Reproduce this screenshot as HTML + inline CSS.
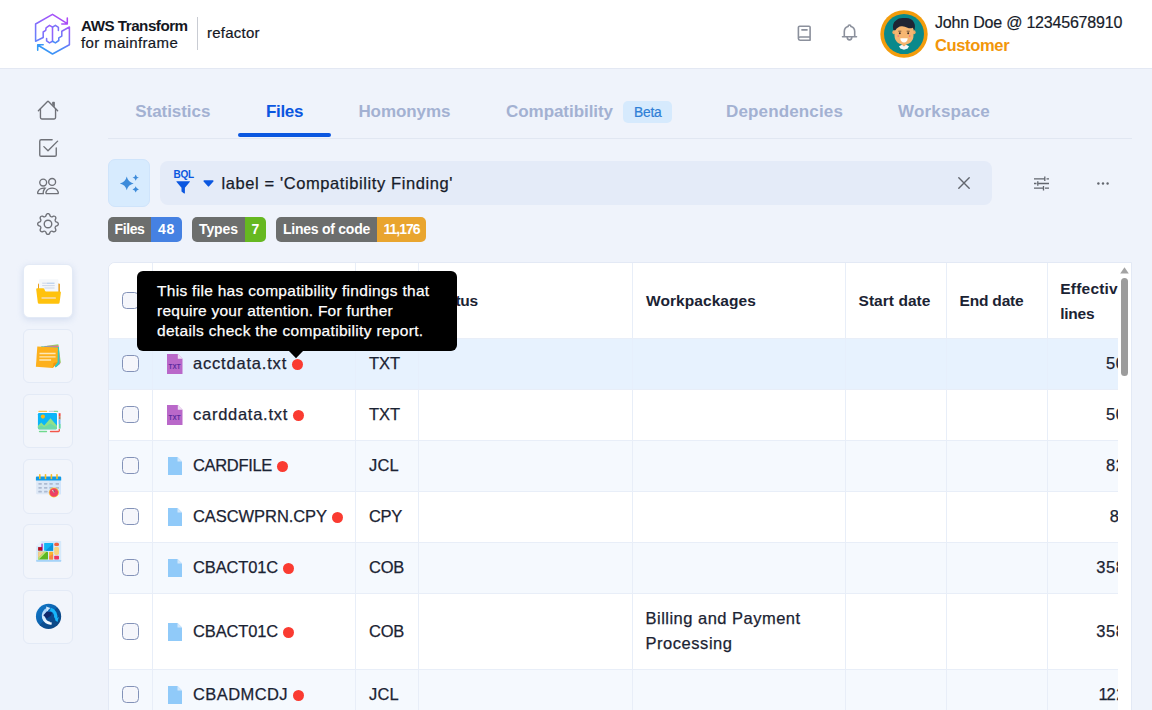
<!DOCTYPE html>
<html lang="en">
<head>
<meta charset="utf-8">
<title>AWS Transform for mainframe - refactor</title>
<style>
*{box-sizing:border-box;margin:0;padding:0}
html,body{width:1152px;height:710px;overflow:hidden}
body{font-family:"Liberation Sans",sans-serif;background:#eff3fb;color:#1b2333;position:relative}
.abs{position:absolute}
.t{position:absolute;white-space:nowrap;line-height:1}
/* header */
#hdr{position:absolute;left:0;top:0;width:1152px;height:68px;background:#fff;border-bottom:1px solid #e3e8f3;box-sizing:content-box}
/* sidebar */
.sic{position:absolute;left:37px;width:22px;height:22px;fill:#6f7178}
.card{position:absolute;left:23px;width:50px;height:54px;border:1px solid #e3eaf6;border-radius:6px;background:#f2f5fb}
.card.on{background:#fff;box-shadow:0 2px 6px rgba(170,188,225,.4)}
/* tabs */
.tab{position:absolute;top:102px;font-size:17px;font-weight:bold;color:#a3b1d2;white-space:nowrap;line-height:20px}
/* badges */
.bdg{position:absolute;top:217px;height:25px;border-radius:5px;overflow:hidden;display:flex;font-size:14px;font-weight:bold;color:#fff;line-height:25px;white-space:nowrap}
.bdg span{display:block;text-align:center;height:25px}
.bdg .g{background:#6c6e6d}
/* table */
#tbl{position:absolute;left:108px;top:262px;width:1024px;height:470px;background:#fff;border:1px solid #e3e9f5;border-radius:7px 0 0 7px;overflow:hidden}
.row{position:absolute;left:0;width:1012px;border-bottom:1px solid #e8eef8}
.vl{position:absolute;top:0;width:1px;height:470px;background:#e8eef8}
.cb{position:absolute;left:13px;width:17px;height:17px;border:1px solid #8392b8;border-radius:4.500px;background:#f5f6fb}
.fn{position:absolute;left:84px;font-size:16.5px;white-space:nowrap;line-height:20px;color:#1b2333}
.ty{position:absolute;left:260px;font-size:16.5px;white-space:nowrap;line-height:20px;color:#1b2333}
.num{position:absolute;font-size:16.5px;white-space:nowrap;line-height:20px;color:#1b2333}
.dot{display:inline-block;width:11px;height:11px;border-radius:50%;background:#fa3b31;margin-left:5px;vertical-align:-1.300px;letter-spacing:0}
.fi{position:absolute;left:58px;width:16px;height:20px}
.fn,.ty,.num{-webkit-text-stroke:.25px #1b2333}
.th{position:absolute;font-size:15.5px;font-weight:bold;white-space:nowrap;line-height:20px;color:#1b2333}
</style>
</head>
<body>
<div id="hdr">
<svg class="abs" style="left:25px;top:5px" width="60" height="60" viewBox="0 0 60 60" fill="none" stroke-width="1.550" stroke-linejoin="round" stroke-linecap="round">
<defs>
<linearGradient id="lg1" x1="10" y1="37" x2="42" y2="10" gradientUnits="userSpaceOnUse"><stop offset="0" stop-color="#5f86fb"/><stop offset=".55" stop-color="#9a5cfb"/><stop offset="1" stop-color="#b044f5"/></linearGradient>
<linearGradient id="lg2" x1="14" y1="48" x2="44" y2="22" gradientUnits="userSpaceOnUse"><stop offset="0" stop-color="#2f9df5"/><stop offset=".5" stop-color="#4b8bf8"/><stop offset="1" stop-color="#a45bf8"/></linearGradient>
</defs>
<path stroke="url(#lg1)" d="M42.3 18.6 L27.5 9.3 L10.6 19 L10.6 36.3 L18.2 32.5 L18.2 27 L20.7 25.4 L21.1 22.8 L24.5 20.3 L27.5 22.1 L27.5 36.3 L24.5 37.9 L21.6 35.9 L21.6 33.4 M36.8 19 H42.3 V13.1"/>
<path stroke="url(#lg2)" d="M12.7 40 L27.5 49 L44.4 39.7 L44.4 22 L36.8 26.2 L36.8 31.1 L33.8 32.8 L33.8 35.5 L30.4 37.9 L27.5 36.3 M27.5 22.1 L30.4 20.3 L33.4 22.4 L33.4 25.4 M18.2 39.7 H12.7 V45.2"/>
</svg>
<div class="t" style="left:81px;top:17.400px;font-size:15.200px;font-weight:bold;color:#14171f;letter-spacing:-.5px;line-height:17px">AWS Transform</div>
<div class="t" style="left:81px;top:34px;font-size:15px;color:#14171f;-webkit-text-stroke:.2px #14171f;letter-spacing:.35px;line-height:18px">for mainframe</div>
<div class="abs" style="left:197px;top:17px;width:1px;height:33px;background:#c9ccd3"></div>
<div class="t" style="left:207px;top:24.400px;font-size:15px;color:#14171f;-webkit-text-stroke:.2px #14171f;letter-spacing:.25px;line-height:18px">refactor</div>
<svg class="abs" style="left:796px;top:24px" width="18" height="19" viewBox="0 0 18 19" fill="none" stroke="#8b909c" stroke-width="1.6" stroke-linecap="round" stroke-linejoin="round"><path d="M2.4 14.6V3.6a1.3 1.3 0 0 1 1.3-1.3h9.4a1 1 0 0 1 1 1V16.2H4a1.6 1.6 0 0 1 0-3.2h10.1"/><path d="M5.9 5.9h5.1"/></svg>
<svg class="abs" style="left:840px;top:23px" width="19" height="20" viewBox="0 0 19 20" fill="none" stroke="#8b909c" stroke-width="1.6" stroke-linecap="round" stroke-linejoin="round"><path d="M2.5 13.7h14M4.3 13.5V8.4a5.2 5.2 0 0 1 3.8-5 1.4 1.4 0 0 1 2.8 0 5.2 5.2 0 0 1 3.8 5v5.1"/><path d="M7.2 14a2.3 2.9 0 0 0 4.6 0"/></svg>
<svg class="abs" style="left:880px;top:10px" width="48" height="48" viewBox="0 0 48 48">
<circle cx="24" cy="24" r="23.7" fill="#f39c0c"/><circle cx="24" cy="24" r="20" fill="#0a898b"/>
<path d="M19.5 43.4 L20 36 h8 l.5 7.4 A20 20 0 0 1 19.500 43.400z" fill="#0a898b"/>
<path d="M21.8 33h4.400v4.500h-4.400z" fill="#f0a862"/>
<path d="M19 36.300 l3-1.500 2 1.700 2-1.700 3 1.500 -1.300 2.300 -3.700 1.200 -3.700-1.200z" fill="#f4f6fa"/>
<ellipse cx="13.900" cy="22.200" rx="1.500" ry="2" fill="#f0a862"/><ellipse cx="34.100" cy="22.200" rx="1.500" ry="2" fill="#f0a862"/>
<path d="M14.500 14 h19 v11.500 c0 5.500-4 9.300-9.500 9.300 s-9.500-3.800-9.500-9.300z" fill="#f6b672"/>
<path d="M13.300 20 C12.300 15.500 13.300 12.200 16 10.500 C18 8.100 22 7.500 25 8.100 C29 7.700 32.700 9.400 33.900 12.500 C35.300 14.500 35.100 17.600 34.400 20.200 L32.700 17.700 C31 18.500 29 18.400 27.500 17.700 C25.500 16.600 23.500 16 21.500 16.200 C19 16.400 17 17.700 15.400 20.200 Z" fill="#1f2534"/>
<circle cx="19.800" cy="23.200" r="1" fill="#3a2b25"/><circle cx="28.200" cy="23.200" r="1" fill="#3a2b25"/>
<path d="M18.300 21.200h3M26.700 21.200h3" stroke="#5a4030" stroke-width=".8"/>
<circle cx="18.300" cy="26" r=".9" fill="#f77f7a"/><circle cx="29.700" cy="26" r=".9" fill="#f77f7a"/>
<path d="M20.300 28.300 h7.400 c0 2.700-1.600 4.200-3.700 4.200 s-3.700-1.500-3.700-4.200z" fill="#fff"/>
</svg>
<div class="t" style="left:935px;top:13.500px;font-size:16px;color:#171c2a;-webkit-text-stroke:.2px #171c2a;letter-spacing:-.2px;line-height:18px">John Doe @ 12345678910</div>
<div class="t" style="left:935px;top:35.500px;font-size:16.500px;font-weight:bold;color:#f2960a;letter-spacing:-.35px;line-height:18px">Customer</div>
</div>
<div id="side">
<svg class="sic" style="top:99px" viewBox="0 0 16 16"><path fill-rule="evenodd" d="M2 13.5V7h1v6.500a.5.5 0 0 0 .5.500h9a.5.5 0 0 0 .5-.5V7h1v6.500a1.500 1.500 0 0 1-1.500 1.500h-9A1.500 1.500 0 0 1 2 13.500zm11-11V6l-2-2V2.500a.5.5 0 0 1 .5-.5h1a.5.5 0 0 1 .5.500z"/><path fill-rule="evenodd" d="M7.293 1.500a1 1 0 0 1 1.414 0l6.647 6.646a.5.5 0 0 1-.708.708L8 2.207 1.354 8.854a.5.5 0 1 1-.708-.708L7.293 1.500z"/></svg>
<svg class="sic" style="top:137px" viewBox="0 0 16 16"><path d="M3 14.500A1.500 1.500 0 0 1 1.500 13V3A1.500 1.500 0 0 1 3 1.500h8a.5.5 0 0 1 0 1H3a.5.5 0 0 0-.5.500v10a.5.5 0 0 0 .5.500h10a.5.5 0 0 0 .5-.5V8a.5.5 0 0 1 1 0v5a1.500 1.500 0 0 1-1.500 1.500H3z"/><path d="m8.354 10.354 7-7a.5.5 0 0 0-.708-.708L8 9.293 5.354 6.646a.5.5 0 1 0-.708.708l3 3a.5.5 0 0 0 .708 0z"/></svg>
<svg class="sic" style="top:175px" viewBox="0 0 16 16"><path d="M15 14s1 0 1-1-1-4-5-4-5 3-5 4 1 1 1 1h8zm-7.978-1A.261.261 0 0 1 7 12.996c.001-.264.167-1.030.760-1.720C8.312 10.629 9.282 10 11 10c1.717 0 2.687.630 3.240 1.276.593.690.758 1.457.760 1.720l-.008.002a.274.274 0 0 1-.014.002H7.022zM11 7a2 2 0 1 0 0-4 2 2 0 0 0 0 4zm3-2a3 3 0 1 1-6 0 3 3 0 0 1 6 0zM6.936 9.280a5.880 5.880 0 0 0-1.230-.247A7.350 7.350 0 0 0 5 9c-4 0-5 3-5 4 0 .667.333 1 1 1h4.216A2.238 2.238 0 0 1 5 13c0-1.010.377-2.042 1.090-2.904.243-.294.526-.569.846-.816zM4.920 10A5.493 5.493 0 0 0 4 13H1c0-.260.164-1.030.760-1.724.545-.636 1.492-1.256 3.160-1.275zM1.500 5.500a3 3 0 1 1 6 0 3 3 0 0 1-6 0zm3-2a2 2 0 1 0 0 4 2 2 0 0 0 0-4z"/></svg>
<svg class="sic" style="top:213px" viewBox="0 0 16 16"><path d="M8 4.754a3.246 3.246 0 1 0 0 6.492 3.246 3.246 0 0 0 0-6.492zM5.754 8a2.246 2.246 0 1 1 4.492 0 2.246 2.246 0 0 1-4.492 0z"/><path d="M9.796 1.343c-.527-1.790-3.065-1.790-3.592 0l-.094.319a.873.873 0 0 1-1.255.520l-.292-.160c-1.640-.892-3.433.902-2.540 2.541l.159.292a.873.873 0 0 1-.520 1.255l-.319.094c-1.790.527-1.790 3.065 0 3.592l.319.094a.873.873 0 0 1 .520 1.255l-.160.292c-.892 1.640.901 3.434 2.541 2.540l.292-.159a.873.873 0 0 1 1.255.520l.094.319c.527 1.790 3.065 1.790 3.592 0l.094-.319a.873.873 0 0 1 1.255-.520l.292.160c1.640.893 3.434-.902 2.540-2.541l-.159-.292a.873.873 0 0 1 .520-1.255l.319-.094c1.790-.527 1.790-3.065 0-3.592l-.319-.094a.873.873 0 0 1-.520-1.255l.160-.292c.893-1.640-.902-3.433-2.541-2.540l-.292.159a.873.873 0 0 1-1.255-.520l-.094-.319zm-2.633.283c.246-.835 1.428-.835 1.674 0l.094.319a1.873 1.873 0 0 0 2.693 1.115l.291-.160c.764-.415 1.600.420 1.184 1.185l-.159.292a1.873 1.873 0 0 0 1.116 2.692l.318.094c.835.246.835 1.428 0 1.674l-.319.094a1.873 1.873 0 0 0-1.115 2.693l.160.291c.415.764-.420 1.600-1.185 1.184l-.291-.159a1.873 1.873 0 0 0-2.693 1.116l-.094.318c-.246.835-1.428.835-1.674 0l-.094-.319a1.873 1.873 0 0 0-2.692-1.115l-.292.160c-.764.415-1.600-.420-1.184-1.185l.159-.291A1.873 1.873 0 0 0 1.945 8.930l-.319-.094c-.835-.246-.835-1.428 0-1.674l.319-.094A1.873 1.873 0 0 0 3.060 4.377l-.160-.292c-.415-.764.420-1.600 1.185-1.184l.292.159a1.873 1.873 0 0 0 2.692-1.115l.094-.319z"/></svg>
<div class="card on" style="top:264px"><svg class="abs" style="left:12px;top:14px" width="26" height="26" viewBox="0 0 26 26"><rect x="2" y="4.600" width="21.900" height="12" rx="1" fill="#e89c1a"/><path d="M3 .9a.6.600 0 0 1 .6-.6h18.200a.6.600 0 0 1 .6.600v13h-19.400z" fill="#f5f7fa"/><path d="M6.200 4.200h4.800M6.200 6.600h12.500M8.500 9h10" stroke="#c9d3e6" stroke-width=".9"/><path d="M11 4.200h7.500" stroke="#9fc0ea" stroke-width=".9"/><path d="M.2 10.400a1 1 0 0 1 1-1.100h6.200a1 1 0 0 1 .8.500l.9 2.100a1 1 0 0 0 .8.500h14a1 1 0 0 1 1 1.100l-1.300 10a1.400 1.400 0 0 1-1.400 1.300H3.200a1.400 1.400 0 0 1-1.400-1.300z" fill="#ffc20d"/><rect x="5.500" y="18" width="14.400" height="2" rx=".6" fill="#f8d58c"/></svg></div>
<div class="card" style="top:329px"><svg class="abs" style="left:11px;top:14px" width="27" height="26" viewBox="0 0 27 26"><path d="M12 1.800l11.300-1.600 2.500 18.300-4 3.800z" fill="#86dc5c"/><path d="M9 2l14.500-.4 1.800 17.900-4 3.500z" fill="#f26d9b"/><path d="M6 2.300l18 .7.600 17-4 3.500z" fill="#2fc9c4"/><path d="M2.300 2.500l20.600 1.100-.3 14.400-4.800 5.900-16.900-1.100z" fill="#fdb01c"/><path d="M17.800 23.900l.7-4.800 4.100-1.100z" fill="#ee9610"/><path d="M4.500 9.500h16.100M4.400 12.900h16.200M4.300 16h11.800" stroke="#fde7b8" stroke-width="1.400"/></svg></div>
<div class="card" style="top:394px"><svg class="abs" style="left:11px;top:14px" width="27" height="26" viewBox="0 0 27 26"><g stroke-width="1.300" fill="none" stroke-linecap="round"><path d="M4 2.500h7.500" stroke="#fbc24d"/><path d="M14.500 2.500h5" stroke="#c9cfdb"/><path d="M19.500 2.500h3" stroke="#7ed99a"/><path d="M4.500 22.500h7" stroke="#6fd98e"/><path d="M15.500 22.500h8" stroke="#f2564a"/><path d="M24.300 20.500v1.500" stroke="#f2564a"/></g><g stroke-width="1.900" fill="none"><path d="M24.600 4.200v3" stroke="#f4443c"/><path d="M24.600 7.200v3.300" stroke="#b57a4a"/><path d="M24.500 10.500v4.500" stroke="#6db6f2"/><path d="M24.700 15v4.600" stroke="#5dd6a4"/></g><rect x="1.700" y="3" width="21.400" height="18.300" rx="1.600" fill="#f7f9fd"/><rect x="2.900" y="4.100" width="19.100" height="16.100" rx="1.200" fill="#0bb5f8"/><path d="M2.900 17l3.300-3.400 3 3 6.300-7.400 6.500 7.500v2.300a1.200 1.200 0 0 1-1.200 1.200H4.100a1.200 1.200 0 0 1-1.200-1.200z" fill="#8fe08b"/><path d="M2.900 18.400l3.300-2 3 1.800 6.300-3.800 6.500 4v.6a1.200 1.200 0 0 1-1.200 1.200H4.100a1.200 1.200 0 0 1-1.200-1.200z" fill="#6fd9a6"/><circle cx="7.900" cy="7.600" r="2.100" fill="#fdb813"/></svg></div>
<div class="card" style="top:459px;height:55px"><svg class="abs" style="left:11px;top:13px" width="28" height="27" viewBox="0 0 28 27"><rect x="1.200" y="6" width="24.800" height="15.300" rx=".8" fill="#dde8f6"/><rect x="14" y="7.500" width="12" height="13.800" fill="#d2e5fb"/><path d="M.9 4.500a1 1 0 0 1 1-1h23.300a1 1 0 0 1 1 1v3h-25.300z" fill="#109ae6"/><g fill="#fbbd23"><rect x="4" y="1" width="1.600" height="5.200" rx=".8"/><rect x="9.700" y="1" width="1.600" height="5.200" rx=".8"/><rect x="15.600" y="1" width="1.600" height="5.200" rx=".8"/><rect x="21.200" y="1" width="1.600" height="5.200" rx=".8"/></g><g fill="#adbbd2"><rect x="3.4" y="9.9" width="3.400" height="1.800" rx=".4"/><rect x="9.0" y="9.9" width="3.400" height="1.800" rx=".4"/><rect x="14.4" y="9.9" width="3.400" height="1.800" rx=".4"/><rect x="20.6" y="9.9" width="3.400" height="1.800" rx=".4"/><rect x="3.4" y="13.9" width="3.400" height="1.800" rx=".4"/><rect x="9.0" y="13.9" width="3.400" height="1.800" rx=".4"/><rect x="14.4" y="13.9" width="3.400" height="1.800" rx=".4"/><rect x="20.6" y="13.9" width="3.400" height="1.800" rx=".4"/><rect x="3.4" y="17.8" width="3.400" height="1.800" rx=".4"/><rect x="9.0" y="17.8" width="3.400" height="1.800" rx=".4"/><rect x="14.4" y="17.8" width="3.400" height="1.800" rx=".4"/><rect x="20.6" y="17.8" width="3.400" height="1.800" rx=".4"/></g><circle cx="18.900" cy="19.500" r="5.100" fill="#fbc535"/><circle cx="18.900" cy="19.500" r="4.300" fill="#ee4062"/><path d="M18.900 19.500l-1.400-2.600" stroke="#f5f0f0" stroke-width="1" fill="none"/><path d="M18.900 19.500l.3-2.300" stroke="#4a6b6b" stroke-width=".8" fill="none"/></svg></div>
<div class="card" style="top:524px;height:55px"><svg class="abs" style="left:12px;top:15px" width="26" height="24" viewBox="0 0 26 24"><path d="M5.300 1.100h19.300a.6.600 0 0 1 .6.600v19.400a.6.600 0 0 1-.6.600H.8a.6.600 0 0 1-.6-.6V6.200z" fill="#d5e9fb"/><path d="M.2 6.200l5.100-5.100v5.100z" fill="#e9f3fd"/><path d="M.2 20h25v1.100a.6.600 0 0 1-.6.600H.8a.6.600 0 0 1-.6-.6z" fill="#a6d3f8"/><rect x="5.300" y="3.700" width="1.500" height="7" fill="#a43cc2"/><rect x="2.100" y="7.100" width="4" height="3.600" fill="#b3101f"/><rect x="8.100" y="3.100" width="9" height="7.600" rx=".5" fill="#12b4f4"/><path d="M17.100 3.600v6.600a.5.500 0 0 1-.5.500H9.500z" fill="#0a92dc"/><rect x="18.200" y="2.800" width="4.800" height="3.200" rx="1.500" fill="#f4603e"/><rect x="18.200" y="6.800" width="4.800" height="8.200" rx="1.800" fill="#f9d47e"/><rect x="18.200" y="15.800" width="4.800" height="3.700" rx=".8" fill="#ee3560"/><rect x="2.100" y="11.800" width="9.900" height="7.700" rx=".6" fill="#5db722"/><path d="M2.100 12.400a.6.600 0 0 1 .6-.6h5.800l-6.400 6.400z" fill="#f8cd8e"/><path d="M2.100 18.200l6.400-6.400h2l-8.400 8.400z" fill="#bfe67a"/><rect x="13.100" y="11.800" width="4" height="7.700" rx=".5" fill="#fbb42c"/><path d="M13.100 16.500l4-2.500v5a.5.500 0 0 1-.5.500h-3a.5.500 0 0 1-.5-.5z" fill="#f5744a" opacity=".7"/></svg></div>
<div class="card" style="top:590px"><svg class="abs" style="left:11px;top:12px" width="27" height="27" viewBox="0 0 27 27"><defs><linearGradient id="cg" x1="0" y1="0" x2="1" y2="1"><stop offset="0" stop-color="#1179cb"/><stop offset=".5" stop-color="#0d62ad"/><stop offset=".5" stop-color="#0c4f93"/><stop offset="1" stop-color="#0b457f"/></linearGradient><linearGradient id="la" x1="0" y1="1" x2="0" y2="0"><stop offset="0" stop-color="#f2f8fe"/><stop offset="1" stop-color="#9fd0fb"/></linearGradient></defs><circle cx="13.55" cy="13.4" r="12.600" fill="url(#cg)"/><path d="M16.59 19.93A7.2 7.2 0 0 1 12.55 6.27" stroke="url(#la)" stroke-width="3.300" fill="none"/><path d="M11 3.500l4.500 1.500-3.500 3z" fill="#cfe7fd"/><path d="M15.41 6.45A7.2 7.2 0 0 1 20.32 15.86" stroke="#17b6fb" stroke-width="3.300" fill="none"/><path d="M19 16.500l4.800-2.500-1.300 5z" fill="#17b6fb"/><path d="M8.300 12.200l3.600-3.600 5.300 1-1.400 3.200-3.800 3z" fill="#10286b"/><path d="M12 15.800l6-4.500 2.500 6-4.800 2.200z" fill="#0b4a8c"/></svg></div>
</div>
<div id="main">
<div class="tab" style="left:135.3px;letter-spacing:-0.056px">Statistics</div>
<div class="tab" style="left:266px;letter-spacing:-0.347px;color:#0b57e0">Files</div>
<div class="tab" style="left:358.4px;letter-spacing:-0.072px">Homonyms</div>
<div class="tab" style="left:506px;letter-spacing:-0.05px">Compatibility</div>
<div class="tab" style="left:726px;letter-spacing:0.143px">Dependencies</div>
<div class="tab" style="left:898px;letter-spacing:0.179px">Workspace</div>
<div class="abs" style="left:623px;top:101px;width:49px;height:22px;border-radius:5px;background:#d6eafd"></div>
<div class="t" style="left:634px;top:103.500px;font-size:13.800px;color:#2f7fd6;-webkit-text-stroke:.2px #2f7fd6;line-height:18px;letter-spacing:-0.219px">Beta</div>
<div class="abs" style="left:108px;top:138px;width:1024px;height:1px;background:#e1e7f2"></div>
<div class="abs" style="left:238px;top:133px;width:93px;height:4px;border-radius:2px;background:#0b57e0"></div>
<div class="abs" style="left:108px;top:159px;width:42px;height:48px;border-radius:7px;background:#d7ebfe;border:1px solid #cfe4fb"></div>
<svg class="abs" style="left:118px;top:172px" width="22" height="22" viewBox="0 0 22 22" fill="#3d8bda"><path d="M8.75 4.549999999999988Q9.99 10.21 15.65 11.449999999999989Q9.99 12.69 8.75 18.349999999999987Q7.51 12.69 1.8499999999999996 11.449999999999989Q7.51 10.21 8.75 4.549999999999988zM17.69999999999999 2.399999999999994Q18.28 5.02 20.899999999999988 5.599999999999994Q18.28 6.18 17.69999999999999 8.799999999999994Q17.12 6.18 14.49999999999999 5.599999999999994Q17.12 5.02 17.69999999999999 2.399999999999994zM17.69999999999999 14.200000000000006Q18.28 16.82 20.899999999999988 17.400000000000006Q18.28 17.98 17.69999999999999 20.600000000000005Q17.12 17.98 14.49999999999999 17.400000000000006Q17.12 16.82 17.69999999999999 14.200000000000006z"/></svg>
<div class="abs" style="left:160px;top:161px;width:832px;height:44px;border-radius:8px;background:#e4ebf8"></div>
<div class="t" style="left:173.500px;top:170px;font-size:10px;font-weight:bold;color:#0b57e0;line-height:10px;letter-spacing:-0.27px">BQL</div>
<svg class="abs" style="left:176px;top:181px" width="14" height="13" viewBox="0 0 14 13" fill="#0b57e0"><path d="M.9 .2h12.400a.5.5 0 0 1 .4.900l-4.800 5.600v5.300a.5.5 0 0 1-.8.400l-2.300-1.600a.6.600 0 0 1-.3-.5v-3.600l-4.900-5.600a.5.5 0 0 1 .3-.9z"/></svg>
<svg class="abs" style="left:203px;top:180px" width="11" height="7" viewBox="0 0 11 7" fill="#0b57e0"><path d="M1.100 .2h8.800a.7.7 0 0 1 .5 1.200l-4.300 4.900a.8.800 0 0 1-1.200 0L.6 1.400A.7.7 0 0 1 1.100 .2z"/></svg>
<div class="t" style="left:221.500px;top:173px;font-size:16.500px;color:#171c2a;-webkit-text-stroke:.25px #171c2a;line-height:20px;letter-spacing:0.593px">label = 'Compatibility Finding'</div>
<svg class="abs" style="left:958px;top:177px" width="12" height="12" viewBox="0 0 12 12" stroke="#62666e" stroke-width="1.400" stroke-linecap="round"><path d="M.8 .8l10.400 10.400M11.200 .8L.8 11.200"/></svg>
<svg class="abs" style="left:1034px;top:176px" width="15" height="15" viewBox="0 0 15 15" stroke="#62666e" stroke-width="1.300" fill="none"><path d="M0 2.800h10.500M12.500 2.800h2.500M0 7.500h2.500M4.500 7.500h10.500M0 12.200h9M11 12.200h4M10.800 .5v4.600M3.800 5.200v4.600M9.500 9.900v4.600"/></svg>
<svg class="abs" style="left:1097px;top:181.500px" width="12" height="3" viewBox="0 0 12 3" fill="#62666e"><circle cx="1.400" cy="1.500" r="1.200"/><circle cx="6" cy="1.500" r="1.200"/><circle cx="10.600" cy="1.500" r="1.200"/></svg>
<div class="bdg" style="left:108px;width:74px"><span class="g" style="width:43px;letter-spacing:-0.378px">Files</span><span style="width:31px;background:#4581e2;letter-spacing:0.719px">48</span></div>
<div class="bdg" style="left:192px;width:74px"><span class="g" style="width:53px;letter-spacing:-0.081px">Types</span><span style="width:21px;background:#66b821;letter-spacing:0.219px">7</span></div>
<div class="bdg" style="left:276px;width:150px"><span class="g" style="width:101px;letter-spacing:-0.245px">Lines of code</span><span style="width:49px;background:#e9a52f;letter-spacing:-1.005px">11,176</span></div>
<div id="tbl">
<div class="row" style="top:0;height:76px;background:#fff"></div>
<div class="row" style="top:76px;height:51px;background:#e7f2fe"></div>
<div class="row" style="top:127px;height:51px;background:#fff"></div>
<div class="row" style="top:178px;height:51px;background:#f5f9fe"></div>
<div class="row" style="top:229px;height:51px;background:#fff"></div>
<div class="row" style="top:280px;height:51px;background:#f5f9fe"></div>
<div class="row" style="top:331px;height:76px;background:#fff"></div>
<div class="row" style="top:407px;height:51px;background:#f5f9fe"></div>
<div class="vl" style="left:43px"></div>
<div class="vl" style="left:246px"></div>
<div class="vl" style="left:309px"></div>
<div class="vl" style="left:523px"></div>
<div class="vl" style="left:736px"></div>
<div class="vl" style="left:837px"></div>
<div class="vl" style="left:938px"></div>
<div class="abs" style="left:43px;top:76px;width:1px;height:50px;background:#e6effc"></div>
<div class="abs" style="left:246px;top:76px;width:1px;height:50px;background:#e6effc"></div>
<div class="abs" style="left:309px;top:76px;width:1px;height:50px;background:#e6effc"></div>
<div class="abs" style="left:523px;top:76px;width:1px;height:50px;background:#e6effc"></div>
<div class="abs" style="left:736px;top:76px;width:1px;height:50px;background:#e6effc"></div>
<div class="abs" style="left:837px;top:76px;width:1px;height:50px;background:#e6effc"></div>
<div class="abs" style="left:938px;top:76px;width:1px;height:50px;background:#e6effc"></div>
<div class="cb" style="top:29px"></div>
<div class="th" style="left:323px;top:27.5px;letter-spacing:-0.229px">Status</div>
<div class="th" style="left:537px;top:27.5px;letter-spacing:0.07px">Workpackages</div>
<div class="th" style="left:749.5px;top:27.5px;letter-spacing:0.05px">Start date</div>
<div class="th" style="left:850.5px;top:27.5px;letter-spacing:-0.184px">End date</div>
<div class="th" style="left:951.3px;top:16px;letter-spacing:0.208px">Effective</div>
<div class="th" style="left:951.3px;top:41px;letter-spacing:-0.269px">lines</div>
<div class="cb" style="top:92.0px"></div>
<svg class="fi" style="left:58px;top:91.0px;width:16px;height:20px" viewBox="0 0 16 20"><path d="M0 0h10.800l4.700 4.700v15.300h-15.500z" fill="#b968c9"/><path d="M10.800 0l4.700 4.700h-4.700z" fill="#efe2f3"/><text x="7.700" y="14.600" font-family="Liberation Sans,sans-serif" font-size="6.300" font-weight="bold" fill="#5a2a9e" text-anchor="middle" letter-spacing=".1">TXT</text></svg>
<div class="fn" style="top:90.2px;letter-spacing:0.806px">acctdata.txt<i class="dot"></i></div>
<div class="ty" style="top:90.2px;letter-spacing:-0.052px">TXT</div>
<div class="num" style="right:5.5px;top:90.2px;letter-spacing:.6px">50</div>
<div class="cb" style="top:143.0px"></div>
<svg class="fi" style="left:58px;top:142.0px;width:16px;height:20px" viewBox="0 0 16 20"><path d="M0 0h10.800l4.700 4.700v15.300h-15.500z" fill="#b968c9"/><path d="M10.800 0l4.700 4.700h-4.700z" fill="#efe2f3"/><text x="7.700" y="14.600" font-family="Liberation Sans,sans-serif" font-size="6.300" font-weight="bold" fill="#5a2a9e" text-anchor="middle" letter-spacing=".1">TXT</text></svg>
<div class="fn" style="top:141.2px;letter-spacing:0.736px">carddata.txt<i class="dot"></i></div>
<div class="ty" style="top:141.2px;letter-spacing:-0.052px">TXT</div>
<div class="num" style="right:5.5px;top:141.2px;letter-spacing:.6px">50</div>
<div class="cb" style="top:194.0px"></div>
<svg class="fi" style="left:59px;top:194.0px;width:14px;height:18px" viewBox="0 0 14 18"><path d="M0 0h9.500l4.500 4.500v13.500h-14z" fill="#90caf9"/><path d="M9.500 0l4.500 4.500h-4.500z" fill="#d3e8fb"/></svg>
<div class="fn" style="top:192.2px;letter-spacing:-0.324px">CARDFILE<i class="dot"></i></div>
<div class="ty" style="top:192.2px;letter-spacing:0.219px">JCL</div>
<div class="num" style="right:5.5px;top:192.2px;letter-spacing:.6px">82</div>
<div class="cb" style="top:245.0px"></div>
<svg class="fi" style="left:59px;top:245.0px;width:14px;height:18px" viewBox="0 0 14 18"><path d="M0 0h9.500l4.500 4.500v13.500h-14z" fill="#90caf9"/><path d="M9.500 0l4.500 4.500h-4.500z" fill="#d3e8fb"/></svg>
<div class="fn" style="top:243.2px;letter-spacing:-0.064px">CASCWPRN.CPY<i class="dot"></i></div>
<div class="ty" style="top:243.2px;letter-spacing:-0.307px">CPY</div>
<div class="num" style="right:11.5px;top:243.2px;letter-spacing:.6px">8</div>
<div class="cb" style="top:296.0px"></div>
<svg class="fi" style="left:59px;top:296.0px;width:14px;height:18px" viewBox="0 0 14 18"><path d="M0 0h9.500l4.500 4.500v13.500h-14z" fill="#90caf9"/><path d="M9.500 0l4.500 4.500h-4.500z" fill="#d3e8fb"/></svg>
<div class="fn" style="top:294.2px;letter-spacing:-0.148px">CBACT01C<i class="dot"></i></div>
<div class="ty" style="top:294.2px;letter-spacing:-0.25px">COB</div>
<div class="num" style="right:5.5px;top:294.2px;letter-spacing:.6px">358</div>
<div class="cb" style="top:359.5px"></div>
<svg class="fi" style="left:59px;top:359.5px;width:14px;height:18px" viewBox="0 0 14 18"><path d="M0 0h9.500l4.500 4.500v13.500h-14z" fill="#90caf9"/><path d="M9.500 0l4.500 4.500h-4.500z" fill="#d3e8fb"/></svg>
<div class="fn" style="top:357.7px;letter-spacing:-0.148px">CBACT01C<i class="dot"></i></div>
<div class="ty" style="top:357.7px;letter-spacing:-0.25px">COB</div>
<div class="num" style="right:5.5px;top:357.7px;letter-spacing:.6px">358</div>
<div class="cb" style="top:423.0px"></div>
<svg class="fi" style="left:59px;top:423.0px;width:14px;height:18px" viewBox="0 0 14 18"><path d="M0 0h9.500l4.500 4.500v13.500h-14z" fill="#90caf9"/><path d="M9.500 0l4.500 4.500h-4.500z" fill="#d3e8fb"/></svg>
<div class="fn" style="top:421.2px;letter-spacing:0.414px">CBADMCDJ<i class="dot"></i></div>
<div class="ty" style="top:421.2px;letter-spacing:0.219px">JCL</div>
<div class="num" style="left:989.6px;top:421.2px;letter-spacing:.6px"><span style="letter-spacing:-1.400px">1</span>22</div>
<div class="fn" style="left:536.5px;top:345px;letter-spacing:0.484px">Billing and Payment</div>
<div class="fn" style="left:536.5px;top:370px;letter-spacing:0.539px">Processing</div>
<div class="abs" style="left:1009px;top:0;width:14px;height:470px;background:#fff"></div>
<div class="abs" style="left:1012px;top:15px;width:7px;height:98px;border-radius:3.500px;background:#9c9c9c"></div>
<svg class="abs" style="left:1011px;top:3.5px" width="9" height="7" viewBox="0 0 9 7"><path d="M4.500 .2l4.300 6.200h-8.600z" fill="#a3a3a3"/></svg>
</div>
<div class="abs" style="left:137px;top:271px;width:320px;height:80px;border-radius:6px;background:#000"></div>
<svg class="abs" style="left:289px;top:350.500px" width="14" height="8" viewBox="0 0 14 8"><path d="M0 0h14l-7 7.300z" fill="#000"/></svg>
<div class="t" style="left:157px;top:280.5px;font-size:15.500px;color:#fff;-webkit-text-stroke:.25px #fff;line-height:20px;letter-spacing:0.299px">This file has compatibility findings that</div>
<div class="t" style="left:157px;top:300.5px;font-size:15.500px;color:#fff;-webkit-text-stroke:.25px #fff;line-height:20px;letter-spacing:0.242px">require your attention. For further</div>
<div class="t" style="left:157px;top:320.5px;font-size:15.500px;color:#fff;-webkit-text-stroke:.25px #fff;line-height:20px;letter-spacing:0.315px">details check the compatibility report.</div>
</div>
</body>
</html>
